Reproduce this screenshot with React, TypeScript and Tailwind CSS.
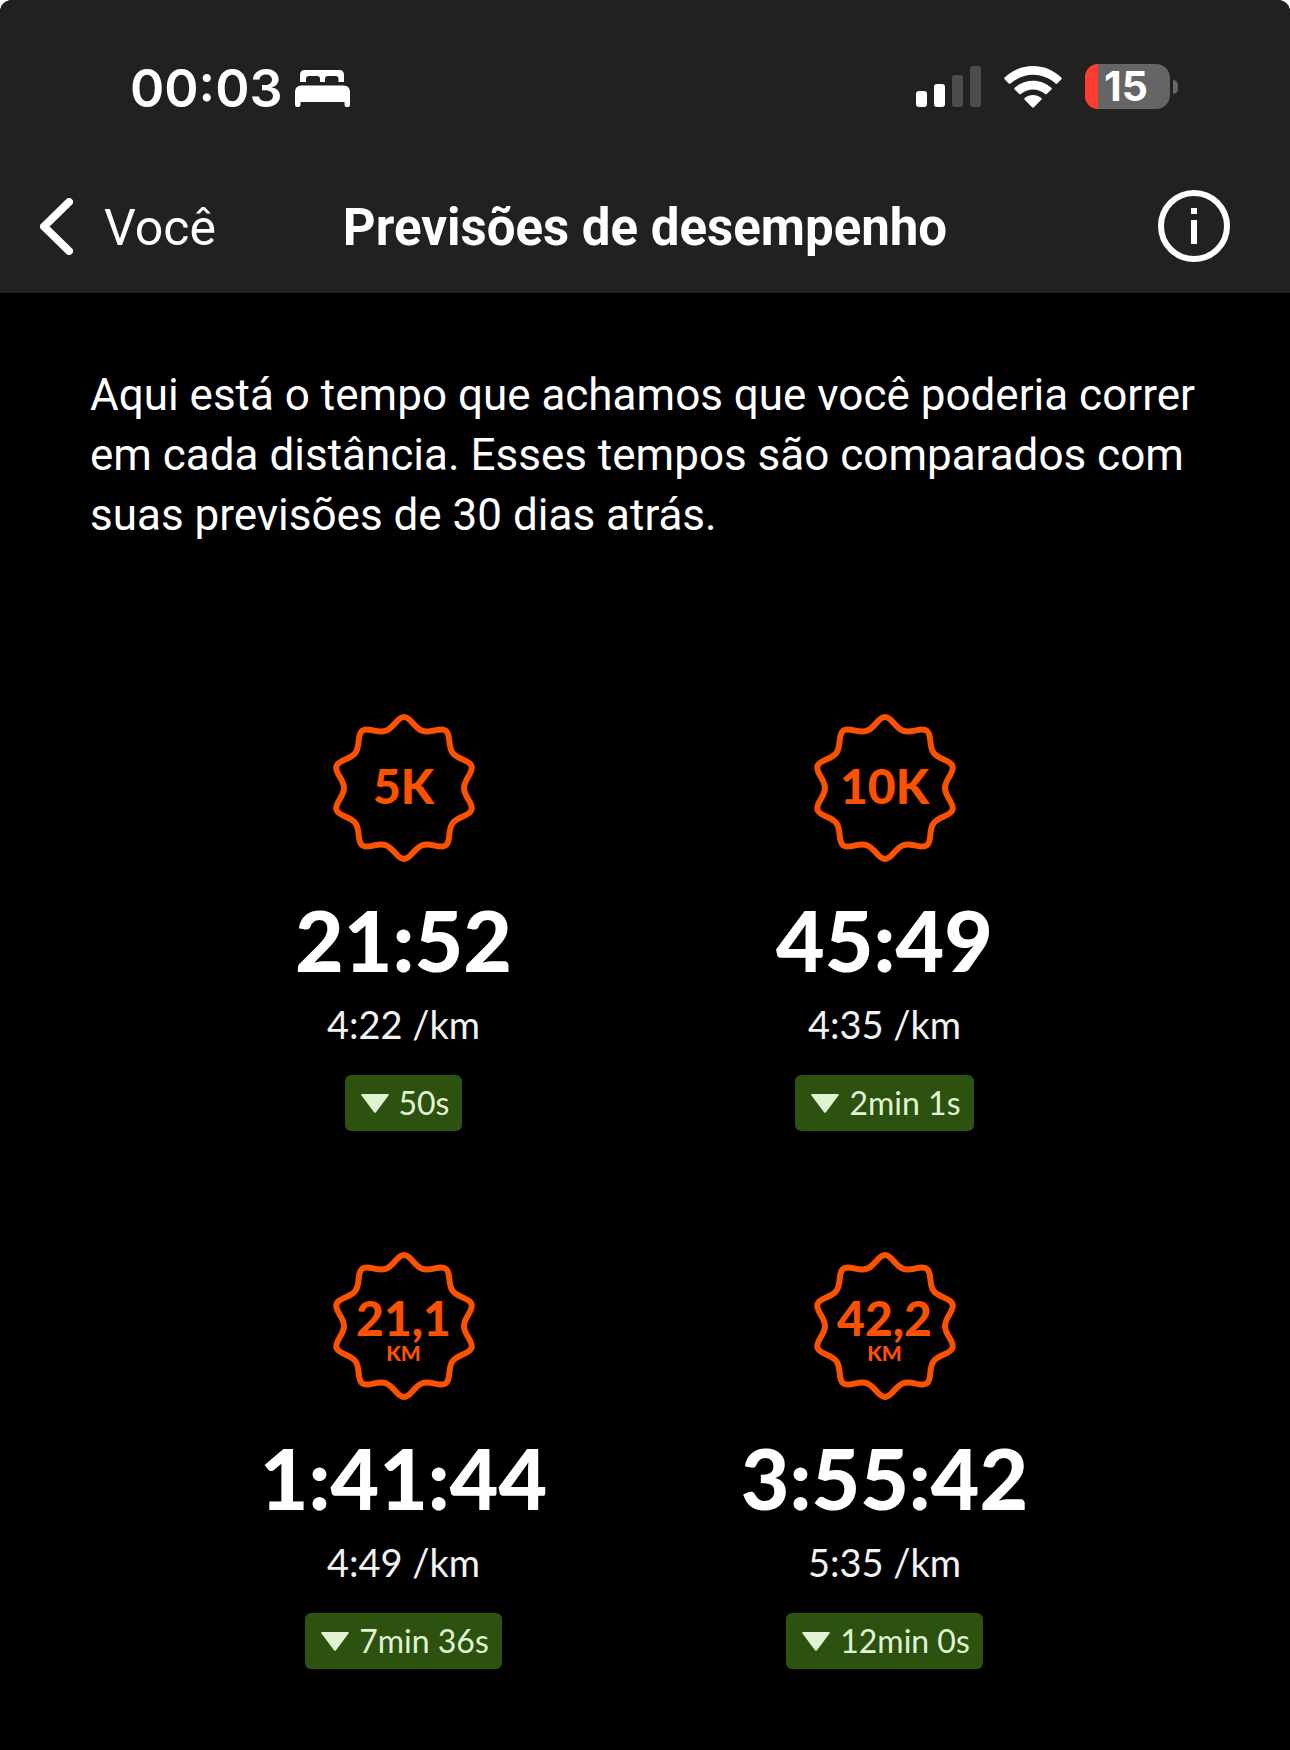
interface Prediction {
  distance: string;
  unit?: string;
  time: string;
  pace: string;
  change: string;
}

const predictions: Prediction[] = [
  { distance: "5K", time: "21:52", pace: "4:22 /km", change: "50s" },
  { distance: "10K", time: "45:49", pace: "4:35 /km", change: "2min 1s" },
  { distance: "21,1", unit: "KM", time: "1:41:44", pace: "4:49 /km", change: "7min 36s" },
  { distance: "42,2", unit: "KM", time: "3:55:42", pace: "5:35 /km", change: "12min 0s" },
];

// Ten-pointed rosette around the origin, with soft peaks and valleys
function rosettePath(points: number, outer: number, inner: number) {
  const step = Math.PI / points;
  const at = (i: number, side: number) => {
    const peak = i % 2 === 0;
    const r = peak ? outer : inner;
    const handle = (peak ? 7 : 9) * side;
    const a = i * step;
    const x = r * Math.sin(a) + handle * Math.cos(a);
    const y = -r * Math.cos(a) + handle * Math.sin(a);
    return `${x.toFixed(2)} ${y.toFixed(2)}`;
  };
  let d = `M${at(0, 0)}`;
  for (let i = 0; i < points * 2; i++) {
    d += `C${at(i, 1)} ${at(i + 1, -1)} ${at(i + 1, 0)}`;
  }
  return d + "Z";
}

const rosette = rosettePath(10, 71, 60);

function BedIcon() {
  return (
    <svg viewBox="0 0 55 37" className="h-[37px] w-[55px]" fill="currentColor" aria-hidden="true">
      <path d="M5 12V5Q5 0 10 0H44Q49 0 49 5V12H43.500V9Q43.500 6 40.500 6H33Q30 6 30 9V12H25V9Q25 6 22 6H14Q11 6 11 9V12Z" />
      <path d="M0 22Q0 15.500 6.500 15.500H48.500Q55 15.500 55 22V35Q55 37 53 37H51.500Q49.500 37 49.500 35V32H5.500V35Q5.500 37 3.500 37H2Q0 37 0 35Z" />
    </svg>
  );
}

function SignalIcon() {
  return (
    <svg viewBox="0 0 65 41" className="h-[41px] w-[65px]" fill="currentColor" aria-hidden="true">
      <rect x="0" y="25" width="11" height="16" rx="3" />
      <rect x="18" y="18" width="11" height="23" rx="3" />
      <rect x="36" y="9" width="11" height="32" rx="3" fill="#4d4d4d" />
      <rect x="54" y="0" width="11" height="41" rx="3" fill="#4d4d4d" />
    </svg>
  );
}

function WifiIcon() {
  return (
    <svg viewBox="0 0 58 42" className="h-[42px] w-[58px]" fill="currentColor" aria-hidden="true">
      <path d="M.6 13.200Q-.2 12.300.7 11.400C17 -3.800 41 -3.800 57.300 11.400Q58.200 12.300 57.400 13.200L53.200 17.400Q52.400 18.200 51.500 17.400C38 6 20 6 6.500 17.400Q5.600 18.200 4.800 17.400Z" />
      <path d="M10.600 23.400Q9.800 22.600 10.700 21.700C21 12.300 37 12.300 47.300 21.700Q48.200 22.600 47.400 23.400L42.800 28Q42 28.700 41.100 28C34 21.900 24 21.900 16.900 28Q16 28.700 15.200 28Z" />
      <path d="M20.500 33.500Q19.700 32.600 20.700 31.900C25.500 28 32.500 28 37.300 31.900Q38.300 32.600 37.500 33.500L29.900 41.200Q29 42 28.100 41.200Z" />
    </svg>
  );
}

function Battery() {
  return (
    <div className="flex items-center gap-[3px]" role="img" aria-label="Bateria 15%">
      <div className="flex h-[45px] w-[85px] items-center rounded-[14px] bg-[#656565]">
        <div className="h-full w-[13px] rounded-l-[14px] bg-[#ff3b30]" />
        <span className="pl-[6px] text-[41px] leading-none font-bold">15</span>
      </div>
      <div className="h-[14px] w-[5px] rounded-r-full bg-[#656565]" />
    </div>
  );
}

function StatusBar() {
  return (
    <div className="flex h-[173px] items-center justify-between pr-[112px] pl-[130px] font-['Inter',sans-serif]">
      <div className="flex items-center gap-[12px] pt-[4px]">
        <span className="text-[52px] leading-none font-semibold">00:03</span>
        <BedIcon />
      </div>
      <div className="flex items-center gap-[23px]">
        <SignalIcon />
        <WifiIcon />
        <Battery />
      </div>
    </div>
  );
}

function NavBar() {
  return (
    <nav className="flex h-[120px] items-center px-[40px] pb-[14px] leading-none">
      <div className="flex flex-1">
        <button type="button" className="flex items-center gap-[31px] text-[50px]">
          <svg viewBox="0 0 33 57" className="h-[57px] w-[33px]" fill="none" stroke="currentColor" strokeWidth="8" strokeLinecap="round" strokeLinejoin="round" aria-hidden="true">
            <path d="M29 4L4 28.500L29 53" />
          </svg>
          <span className="pt-[3px]">Você</span>
        </button>
      </div>
      <h1 className="pt-[3px] text-[51px] font-bold">Previsões de desempenho</h1>
      <div className="flex flex-1 justify-end">
        <button type="button" aria-label="Informações" className="mr-[20px]">
          <svg viewBox="0 0 72 72" className="h-[72px] w-[72px]" aria-hidden="true">
            <circle cx="36" cy="36" r="33" fill="none" stroke="currentColor" strokeWidth="6" />
            <path d="M33 18h6v6h-6zM33 30h6v24h-6z" fill="currentColor" />
          </svg>
        </button>
      </div>
    </nav>
  );
}

function DistanceBadge({ distance, unit }: { distance: string; unit?: string }) {
  return (
    <div className="grid h-[148px] place-items-center font-['Lato',sans-serif] text-[#fc5200]">
      <svg viewBox="-74 -74 148 148" className="col-start-1 row-start-1 h-[148px] w-[148px]" fill="none" stroke="currentColor" strokeWidth="6" aria-hidden="true">
        <path d={rosette} />
      </svg>
      <div className={`col-start-1 row-start-1 flex flex-col items-center font-black ${unit ? "pt-[6px]" : "pb-[4px]"}`}>
        <span className="text-[48px] leading-[48px]">{distance}</span>
        {unit && <span className="text-[21px] leading-[22px]">{unit}</span>}
      </div>
    </div>
  );
}

function PredictionCard({ data }: { data: Prediction }) {
  return (
    <div className="flex flex-col items-center font-['Lato',sans-serif]">
      <DistanceBadge distance={data.distance} unit={data.unit} />
      <div className="mt-[36px] text-[84px] leading-[84px] font-black">{data.time}</div>
      <div className="mt-[20px] text-[38px] leading-[44px] text-[#f2f2f0]">{data.pace}</div>
      <div className="mt-[29px] flex h-[56px] items-center gap-[10px] rounded-[6px] bg-[#2d510f] pr-[13px] pl-[16px] text-[32px] leading-none text-[#e0f4d4]">
        <svg viewBox="0 0 28 19" className="h-[19px] w-[28px]" fill="currentColor" aria-hidden="true">
          <path d="M1.200 0H26.800Q28.400 0 27.500 1.400L15 18.200Q14 19.400 13 18.200L.5 1.400Q-.4 0 1.200 0Z" />
        </svg>
        <span>{data.change}</span>
      </div>
    </div>
  );
}

export default function App() {
  return (
    <div className="bg-white">
      <div className="min-h-screen overflow-hidden rounded-t-[12px] bg-black font-['Roboto',sans-serif] text-white">
        <header className="bg-[#212120]">
          <StatusBar />
          <NavBar />
        </header>
        <main>
          <p className="px-[90px] pt-[72px] text-[44px] leading-[60px]">
            Aqui está o tempo que achamos que você poderia correr em cada distância. Esses tempos são comparados com suas previsões de 30 dias atrás.
          </p>
          <section className="grid grid-cols-2 gap-y-[121px] pt-[169px] pr-[165px] pl-[163px]">
            {predictions.map((p) => (
              <PredictionCard key={p.distance} data={p} />
            ))}
          </section>
        </main>
      </div>
    </div>
  );
}
